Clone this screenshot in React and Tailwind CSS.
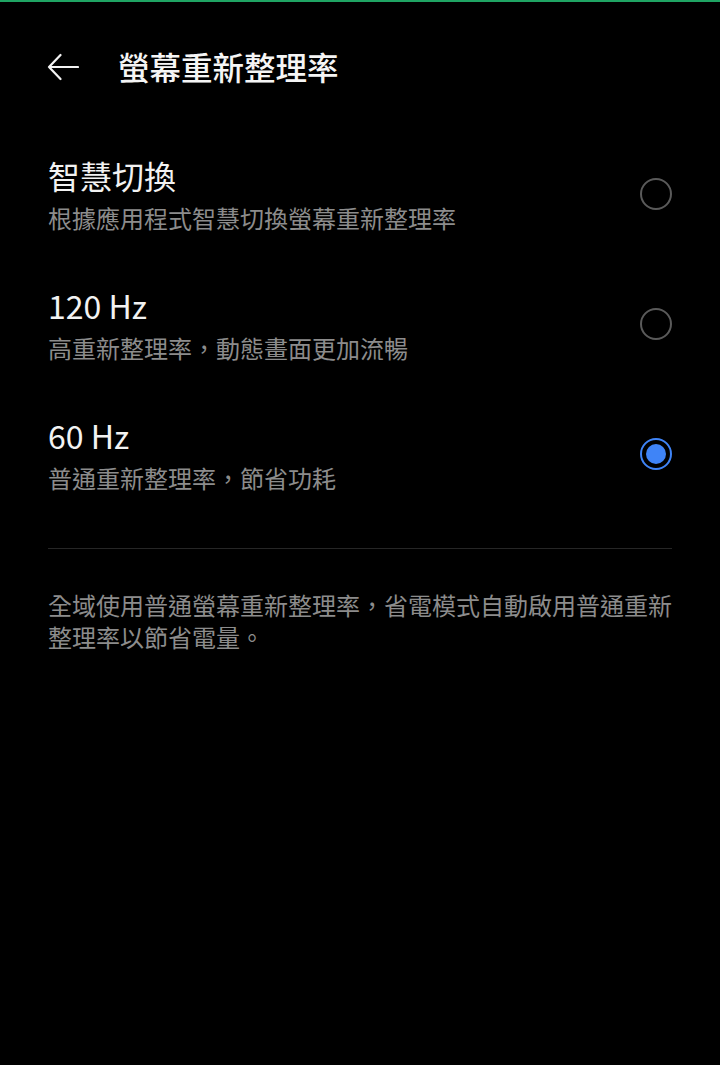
export default function App() {
  const font = { fontFamily: '"Noto Sans CJK TC", "Noto Sans", sans-serif' };
  const options = [
    { title: "智慧切換", sub: "根據應用程式智慧切換螢幕重新整理率", selected: false },
    { title: "120 Hz", sub: "高重新整理率，動態畫面更加流暢", selected: false },
    { title: "60 Hz", sub: "普通重新整理率，節省功耗", selected: true },
  ];
  return (
    <div className="min-h-[1065px] w-[720px] bg-black border-t-2 border-[#1fa463]" style={font}>
      <div className="h-[130px] flex items-center pl-[47px]">
        <svg width="32" height="28" viewBox="0 0 32 28" fill="none" stroke="#f2f2f2" strokeWidth="2.2" strokeLinecap="round" strokeLinejoin="round">
          <path d="M31 14 H2 M13.5 2 L2 14 L13.5 26" />
        </svg>
        <span className="ml-[39px] text-[31.5px] leading-[40px] text-[#f5f5f5] font-medium mt-[-2px]">螢幕重新整理率</span>
      </div>
      <div className="px-[48px]">
        {options.map((o) => (
          <div key={o.title} className="h-[130px] flex items-center justify-between">
            <div className="flex flex-col mb-[5px]">
              <span className="text-[32px] leading-[40px] text-[#f2f2f2]">{o.title}</span>
              <span className="text-[24px] leading-[32px] text-[#8c8c8c] mt-[7px]">{o.sub}</span>
            </div>
            {o.selected ? (
              <div className="w-[32px] h-[32px] rounded-full border-[2.5px] border-[#3f84f7] flex items-center justify-center mt-[-6px]">
                <div className="w-[20px] h-[20px] rounded-full bg-[#3f84f7]" />
              </div>
            ) : (
              <div className="w-[32px] h-[32px] rounded-full border-2 border-[#5a5a5a] mt-[-6px]" />
            )}
          </div>
        ))}
        <div className="mt-[26px] h-px bg-[#262626]" />
        <p className="mt-[40px] text-[24px] leading-[32px] text-[#8c8c8c]">
          全域使用普通螢幕重新整理率，省電模式自動啟用普通重新整理率以節省電量。
        </p>
      </div>
    </div>
  );
}
